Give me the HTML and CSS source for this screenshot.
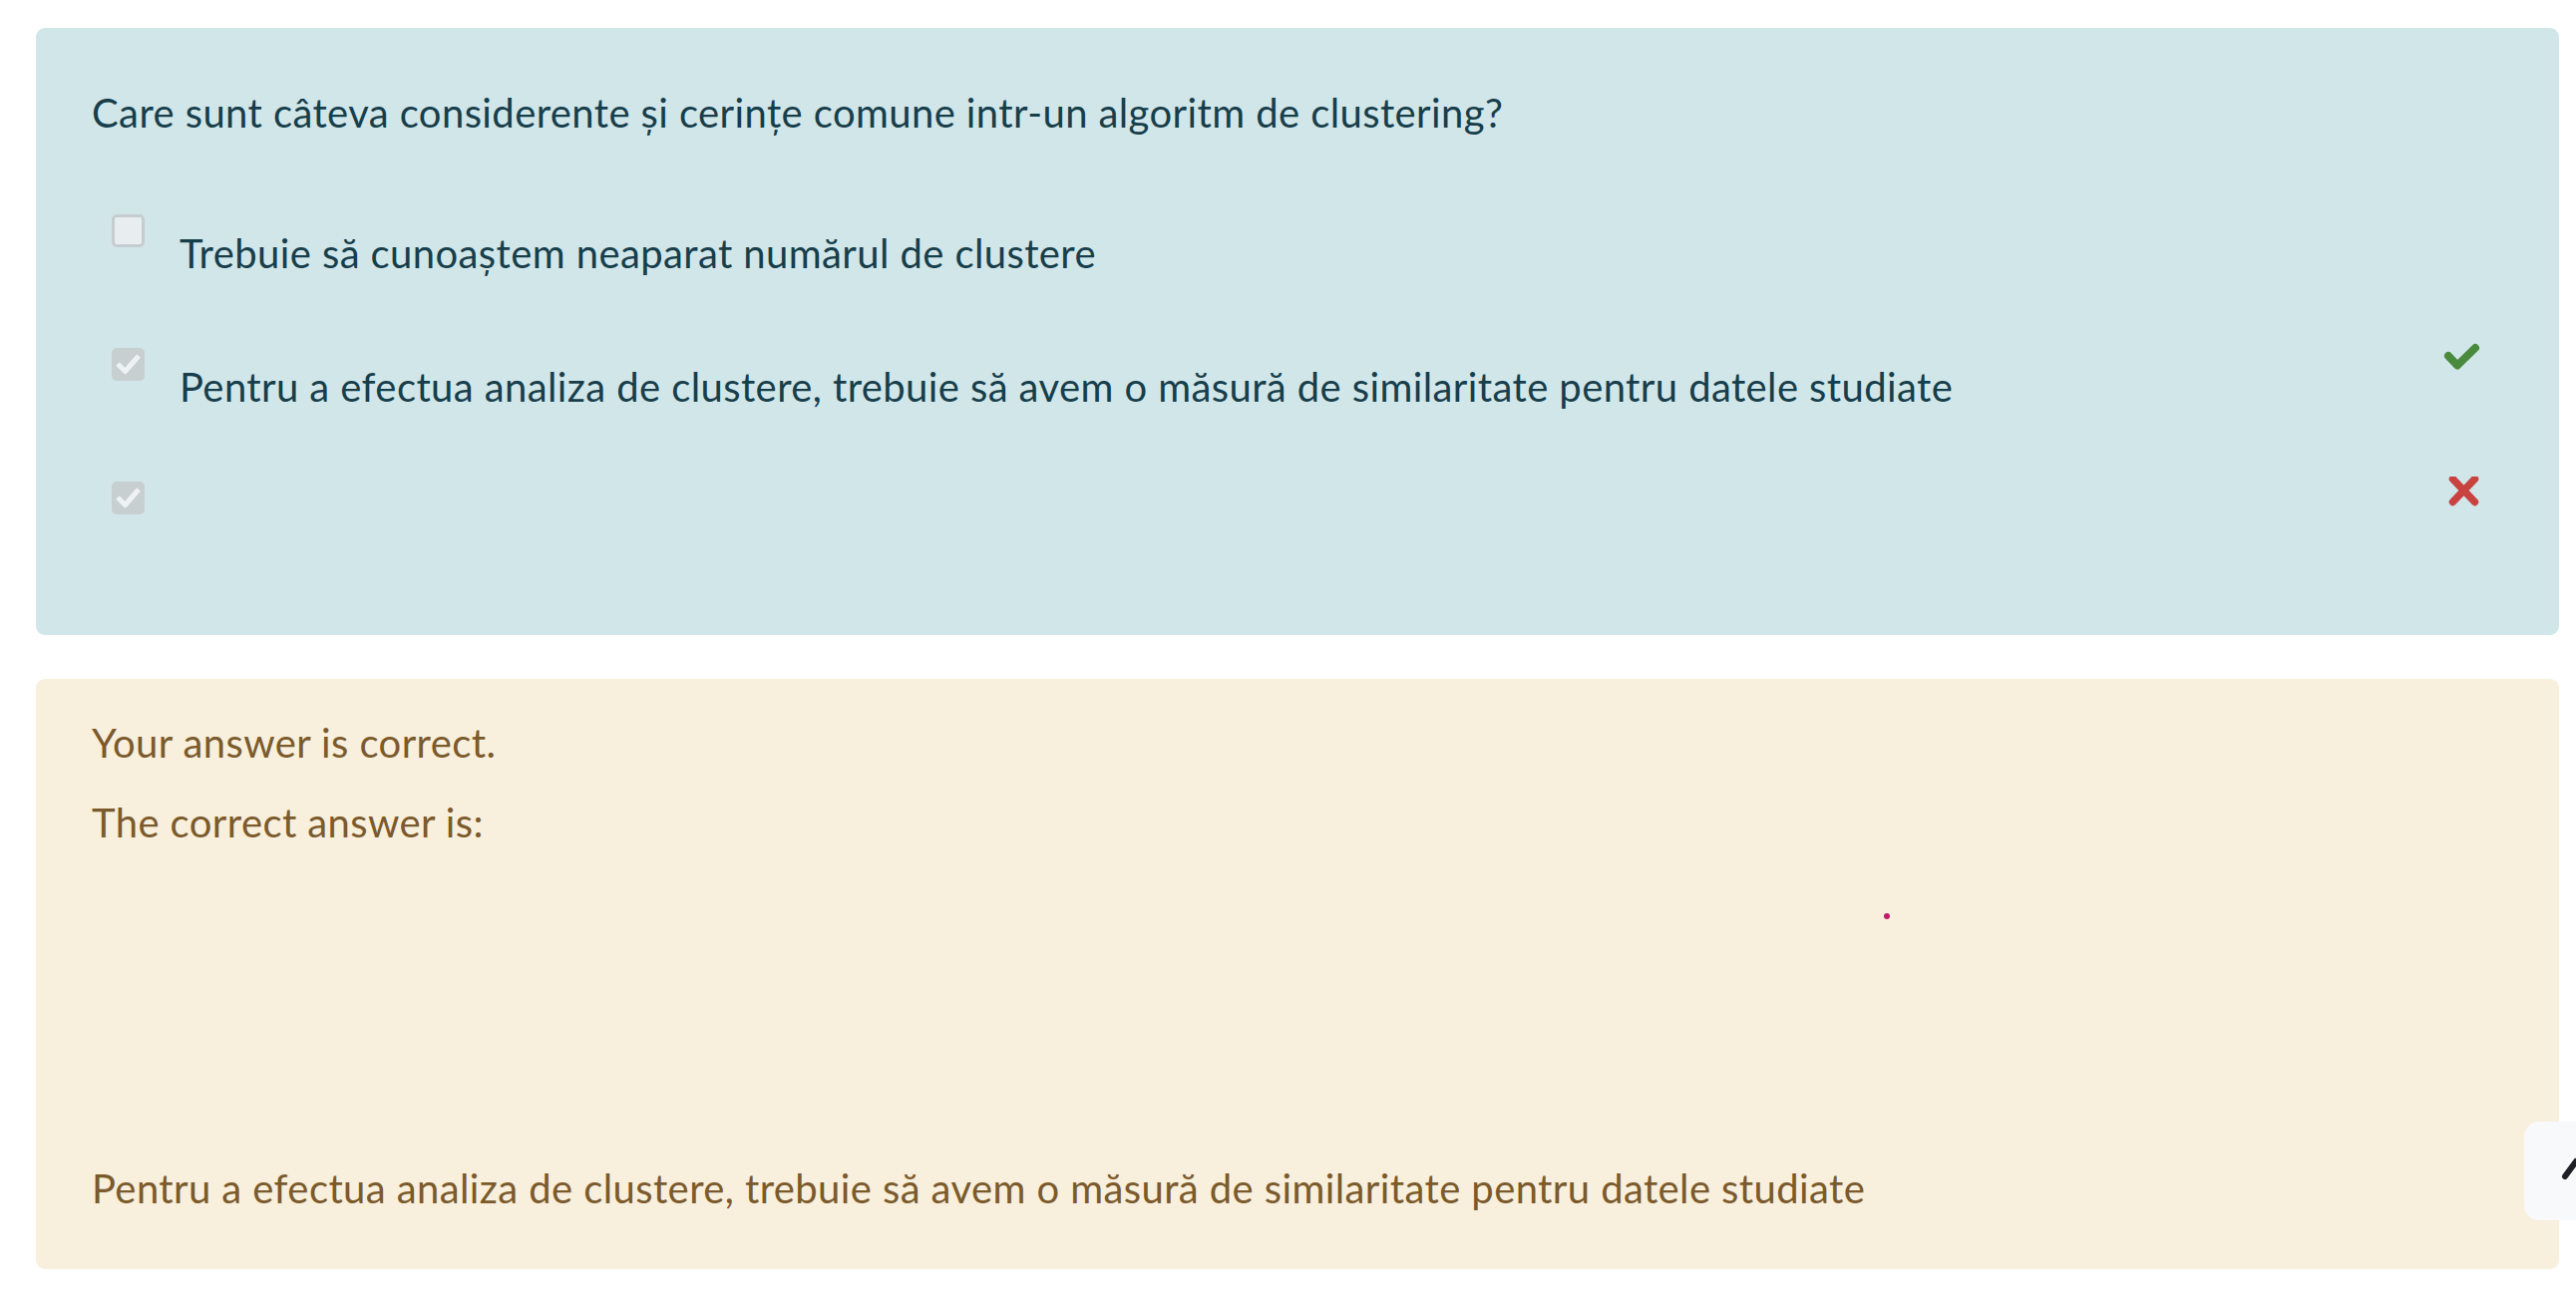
FILE: index.html
```html
<!DOCTYPE html>
<html lang="ro">
<head>
<meta charset="utf-8">
<title>Întrebare</title>
<link rel="stylesheet" href="styles.css">
</head>
<body>
<div class="page">
  <div class="formulation">
    <div class="qtext">Care sunt câteva considerente și cerințe comune intr-un algoritm de clustering?</div>
    <div class="answers">
      <div class="option">
        <span class="cb"></span>
        <span class="label">Trebuie să cunoaștem neaparat numărul de clustere</span>
      </div>
      <div class="option">
        <span class="cb checked"><svg viewBox="0 0 33 33" width="33" height="33"><polyline points="6,16 13.5,23.5 27,8" fill="none" stroke="#eef2f3" stroke-width="5" stroke-linejoin="round"/></svg></span>
        <span class="label">Pentru a efectua analiza de clustere, trebuie să avem o măsură de similaritate pentru datele studiate</span>
        <svg class="mark" viewBox="0 0 40 32" width="40" height="32"><polyline points="5,13 14,22.5 32,5" fill="none" stroke="#4a8a3d" stroke-width="8" stroke-linejoin="round" stroke-linecap="round"/></svg>
      </div>
      <div class="option">
        <span class="cb checked"><svg viewBox="0 0 33 33" width="33" height="33"><polyline points="6,16 13.5,23.5 27,8" fill="none" stroke="#eef2f3" stroke-width="5" stroke-linejoin="round"/></svg></span>
        <span class="label"></span>
        <svg class="mark" viewBox="0 0 40 32" width="40" height="32"><path d="M9.5 2.5 L31.5 25.5 M31.5 2.5 L9.5 25.5" fill="none" stroke="#c8423f" stroke-width="7.5" stroke-linecap="round"/></svg>
      </div>
    </div>
  </div>
  <div class="outcome">
    <p>Your answer is correct.</p>
    <p>The correct answer is:</p>
    <div class="rightanswer">
      <span class="dot"></span>
      <p class="answer-text">Pentru a efectua analiza de clustere, trebuie să avem o măsură de similaritate pentru datele studiate</p>
    </div>
  </div>
</div>
<button class="drawer-toggle" type="button" aria-label="Open drawer">
  <svg viewBox="0 0 106 99" width="106" height="99"><polyline points="41,55 52,40 63,55" fill="none" stroke="#1d2125" stroke-width="6" stroke-linecap="round" stroke-linejoin="round"/></svg>
</button>
</body>
</html>
```

FILE: styles.css
```css
html, body {
  margin: 0;
  padding: 0;
  background: #ffffff;
}

body {
  font-family: Lato, "Open Sans", "Noto Sans", sans-serif;
  font-size: 40px;
  letter-spacing: 0.4px;
  line-height: 58px;
  overflow: hidden;
}

.page {
  padding: 28px 17px 0 36px;
}

.formulation {
  background: #d1e6e9;
  color: #173e4b;
  border-radius: 9px;
  padding: 56px 76px 20px 56px;
}

.qtext {
  margin: 0;
}

.answers {
  margin-top: 73px;
}

.option {
  display: flex;
  align-items: flex-start;
  height: 134px;
}

.cb {
  flex: none;
  box-sizing: border-box;
  width: 33px;
  height: 33px;
  margin-left: 20px;
  border-radius: 5px;
  background: #e8eef0;
  border: 3px solid #c6cdd0;
}

.cb.checked {
  background: #c8cfd1;
  border: none;
}

.cb svg {
  display: block;
}

.label {
  margin-left: 35px;
  margin-top: 10px;
}

.mark {
  margin-left: auto;
  margin-top: -5px;
  flex: none;
}

.outcome {
  margin-top: 44px;
  background: #f8efdd;
  color: #7b5a2b;
  border-radius: 9px;
  padding: 35px 56px 52px 56px;
}

.outcome p {
  margin: 0;
}

.outcome p + p {
  margin-top: 22px;
}

.rightanswer {
  display: block;
}

.dot {
  display: block;
  width: 6px;
  height: 6px;
  border-radius: 50%;
  background: #bd1f6a;
  margin: 62px 0 0 1797px;
}

.outcome .answer-text {
  margin-top: 241px;
}

.drawer-toggle {
  position: fixed;
  left: 2531px;
  top: 1125px;
  width: 106px;
  height: 99px;
  padding: 0;
  border: none;
  border-radius: 15px;
  background: #f8f9fa;
}

.drawer-toggle svg {
  display: block;
}
```
